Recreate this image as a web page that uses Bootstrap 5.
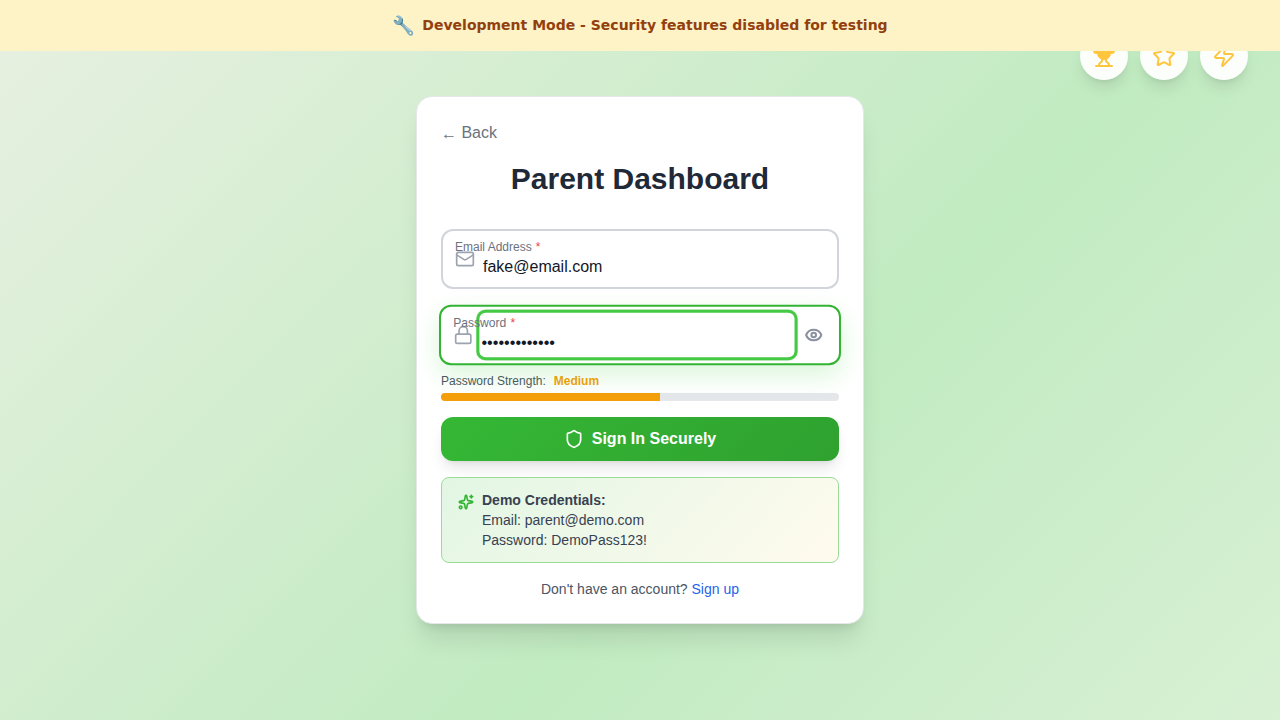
<!DOCTYPE html>
<html lang="en">
<head>
<meta charset="utf-8">
<meta name="viewport" content="width=device-width, initial-scale=1">
<title>Parent Dashboard</title>
<link href="https://cdn.jsdelivr.net/npm/bootstrap@5.3.0/dist/css/bootstrap.min.css" rel="stylesheet">
<style>
body{height:720px;overflow:hidden;font-family:"Liberation Sans",Arial,sans-serif;color:#1f2937;background:linear-gradient(135deg,#e8f0e1 0%,#c1ebc1 61%,#d8f0d4 100%) no-repeat}
svg{fill:none;stroke:currentColor;stroke-width:2;stroke-linecap:round;stroke-linejoin:round;display:block;flex:none}
.dev-banner{height:51px;background:#fef3c7;color:#92400e;font:bold 14px/21px "DejaVu Sans",sans-serif;z-index:20}
.dev-banner .emoji{width:22px;font-size:18.5px;padding-top:1px;font-family:"Noto Color Emoji","DejaVu Sans",sans-serif}
.float-tools{top:32px;right:32px;gap:12px;z-index:10}
.tool{width:48px;height:48px;background:rgba(255,255,255,.93);color:#ffc53d;box-shadow:0 10px 15px -3px rgba(0,0,0,.1),0 4px 6px -4px rgba(0,0,0,.1)}
.login{width:448px;height:528px;margin-top:45px;padding:24px;border:1px solid #e5e7eb;border-radius:16px;box-shadow:0 20px 25px -5px rgba(0,0,0,.1),0 8px 10px -6px rgba(0,0,0,.1)}
.back{font-size:16px;line-height:24px;color:#6b7280}
.back span{display:inline-block;transform:translateY(1px)}
.login h1{font-size:30px;line-height:36px;margin:16px 0 32px;font-weight:700;color:#1f2937}
.field{height:60px;border:2px solid #d1d5db;border-radius:12px;padding:0 12px;background:#fff}
.field label{left:12px;top:8px;font-size:12px;line-height:16px;color:#6b7280;z-index:2}
.field label span{color:#ef4444;margin-left:.7px}
.field svg{color:#9ca3af}
.field input{border:0;background:transparent;padding:18px 0 2px 4px;height:48px;margin-left:4px;font:16px/24px "Liberation Sans",sans-serif;color:#111827;outline:0;min-width:0}
.field.active{border-color:#32b432;margin-top:16px;transform:scale(1.01);box-shadow:0 10px 25px rgba(50,205,50,.18)}
.field.active input{outline:3px solid #44c944;outline-offset:-2px;border-radius:8px;box-shadow:0 0 0 1.5px rgba(68,201,68,.3)}
.reveal{border:0;background:transparent;padding:4px;margin-left:4px}
.field .reveal svg{color:#8b90a0;stroke-width:2.7}
.strength{font-size:12px;line-height:16px;margin-top:8px;gap:8px;color:#4b5563}
.strength strong{color:#f59e0b}
.meter{height:8px;margin-top:4px;background:#e5e7eb;border-radius:4px}
.meter .progress-bar{background:#f59e0b}
.signin{height:44px;margin-top:16px;border:0;border-radius:12px;font-size:16px;font-weight:700;color:#fff;background:linear-gradient(135deg,#35b835,#2fa12f);box-shadow:0 10px 15px -3px rgba(0,0,0,.1),0 4px 6px -4px rgba(0,0,0,.1)}
.demo{height:86px;margin-top:16px;padding:12px 16px;border:1px solid #98dc98;border-radius:8px;background:linear-gradient(135deg,#e2f6e4,#fffbee);font-size:14px;line-height:20px;color:#374151}
.demo svg{color:#32b432;margin-top:4px;stroke-width:2.4}
.signup{font-size:14px;line-height:20px;margin-top:16px;color:#4b5563}
.signup a{color:#2563eb}
</style>
</head>
<body>
<header class="dev-banner position-relative d-flex align-items-center justify-content-center gap-2"><span class="emoji">🔧</span><span>Development Mode - Security features disabled for testing</span></header>
<div class="float-tools position-absolute d-flex">
<div class="tool rounded-circle d-flex align-items-center justify-content-center"><svg width="24" height="24" viewBox="0 0 24 24" style="fill:currentColor"><path d="M6 9H4.5a2.5 2.5 0 0 1 0-5H6M18 9h1.5a2.5 2.5 0 0 0 0-5H18M4 22h16M10 14.660V17c0 .55-.47.98-.97 1.210C7.850 18.750 7 20.240 7 22M14 14.660V17c0 .55.47.98.97 1.210C16.150 18.750 17 20.240 17 22M18 2H6v7a6 6 0 0 0 12 0V2Z"/></svg></div>
<div class="tool rounded-circle d-flex align-items-center justify-content-center"><svg width="24" height="24" viewBox="0 0 24 24"><path d="M11.525 2.295a.53.53 0 0 1 .95 0l2.310 4.679a2.123 2.123 0 0 0 1.595 1.160l5.166.756a.53.53 0 0 1 .294.904l-3.736 3.638a2.123 2.123 0 0 0-.611 1.878l.882 5.140a.53.53 0 0 1-.771.560l-4.618-2.428a2.122 2.122 0 0 0-1.973 0L6.396 21.010a.53.53 0 0 1-.77-.560l.881-5.139a2.122 2.122 0 0 0-.611-1.879L2.160 9.795a.53.53 0 0 1 .294-.906l5.165-.755a2.122 2.122 0 0 0 1.597-1.160z"/></svg></div>
<div class="tool rounded-circle d-flex align-items-center justify-content-center"><svg width="24" height="24" viewBox="0 0 24 24"><path d="M4 14a1 1 0 0 1-.78-1.630l9.900-10.200a.5.5 0 0 1 .86.460l-1.920 6.020A1 1 0 0 0 13 10h7a1 1 0 0 1 .78 1.630l-9.900 10.200a.5.5 0 0 1-.86-.460l1.920-6.020A1 1 0 0 0 11 14z"/></svg></div>
</div>
<main class="d-flex justify-content-center">
<section class="login bg-white">
<div class="back"><span>←</span> Back</div>
<h1 class="text-center">Parent Dashboard</h1>
<div class="field position-relative d-flex align-items-center">
<label class="position-absolute" for="email">Email Address <span>*</span></label>
<svg width="20" height="20" viewBox="0 0 24 24"><rect x="2" y="4" width="20" height="16" rx="2"/><path d="m22 7-8.970 5.700a1.940 1.940 0 0 1-2.060 0L2 7"/></svg>
<input id="email" class="flex-grow-1" type="text" value="fake@email.com">
</div>
<div class="field active position-relative d-flex align-items-center">
<label class="position-absolute" for="pw">Password <span>*</span></label>
<svg width="20" height="20" viewBox="0 0 24 24"><rect x="3" y="11" width="18" height="11" rx="2"/><path d="M7 11V7a5 5 0 0 1 10 0v4"/></svg>
<input id="pw" class="flex-grow-1" type="password" value="DemoPass1234!">
<button class="reveal" type="button" aria-label="Show password"><svg width="18" height="18" viewBox="0 0 24 24"><path d="M2.062 12.348a1 1 0 0 1 0-.696 10.750 10.750 0 0 1 19.876 0 1 1 0 0 1 0 .696 10.750 10.750 0 0 1-19.876 0"/><circle cx="12" cy="12" r="3"/></svg></button>
</div>
<div class="strength d-flex"><span>Password Strength:</span><strong>Medium</strong></div>
<div class="meter progress"><div class="progress-bar" style="width:55%"></div></div>
<button class="signin btn w-100 d-flex align-items-center justify-content-center gap-2"><svg width="20" height="20" viewBox="0 0 24 24"><path d="M20 13c0 5-3.500 7.500-7.660 8.950a1 1 0 0 1-.67-.010C7.500 20.500 4 18 4 13V6a1 1 0 0 1 1-1c2 0 4.500-1.200 6.240-2.720a1.170 1.170 0 0 1 1.520 0C14.510 3.810 17 5 19 5a1 1 0 0 1 1 1z"/></svg>Sign In Securely</button>
<div class="demo d-flex gap-2"><svg width="16" height="16" viewBox="0 0 24 24"><path d="M11.017 2.814a1 1 0 0 1 1.966 0l1.051 5.558a2 2 0 0 0 1.594 1.594l5.558 1.051a1 1 0 0 1 0 1.966l-5.558 1.051a2 2 0 0 0-1.594 1.594l-1.051 5.558a1 1 0 0 1-1.966 0l-1.051-5.558a2 2 0 0 0-1.594-1.594l-5.558-1.051a1 1 0 0 1 0-1.966l5.558-1.051a2 2 0 0 0 1.594-1.594zM20 2v4M22 4h-4"/><circle cx="4" cy="20" r="2"/></svg><div><strong>Demo Credentials:</strong><br>Email: parent@demo.com<br>Password: DemoPass123!</div></div>
<div class="signup text-center">Don't have an account? <a class="text-decoration-none" href="#">Sign up</a></div>
</section>
</main>
<script src="https://cdn.jsdelivr.net/npm/bootstrap@5.3.0/dist/js/bootstrap.bundle.min.js"></script>
</body>
</html>
